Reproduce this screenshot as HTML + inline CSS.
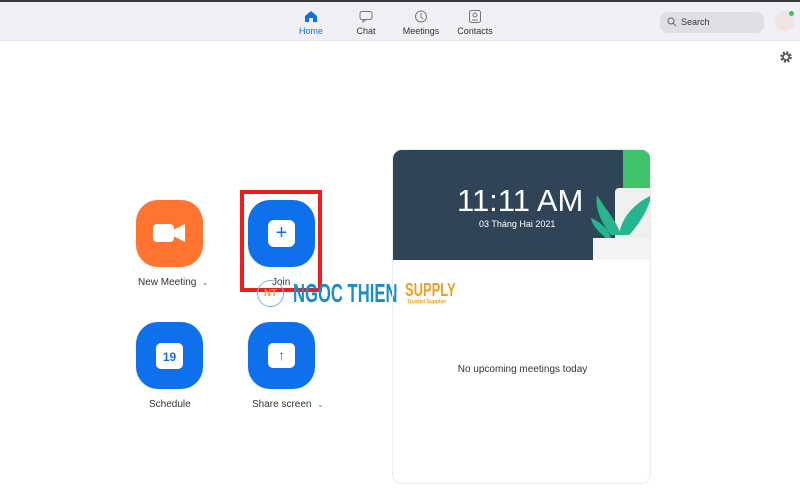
<!DOCTYPE html>
<html><head><meta charset="utf-8"><style>
*{margin:0;padding:0;box-sizing:border-box}
body{width:800px;height:494px;background:#fff;font-family:"Liberation Sans",sans-serif;position:relative;overflow:hidden}
.top{position:absolute;left:0;top:0;width:800px;height:41px;background:#f0f0f4;border-top:2px solid #3a3a3a;border-bottom:1px solid #e6e6ea}
.nav{position:absolute;top:8px;text-align:center;font-size:9px;color:#333;width:60px}
.nav svg{display:block;margin:0 auto 3px}
.search{position:absolute;left:660px;top:10px;width:104px;height:21px;border-radius:8px;background:#dfdfe3;font-size:9px;color:#333;padding:5px 0 0 21px}
.btn{position:absolute;width:67px;height:67px;border-radius:22px;background:#0e71eb}
.lbl{position:absolute;font-size:10px;color:#333;text-align:center}
.card{position:absolute;left:392px;top:149px;width:259px;height:335px;border:1px solid #ececec;border-radius:10px;overflow:hidden}
.hd{height:110px;background:#2f4457;position:relative;color:#fff}
</style></head><body>
<div class="top">
<div class="nav" style="left:281px;color:#0e71eb">
<svg width="14" height="13" viewBox="0 0 14 13"><path d="M1 6 L7 1 L13 6 V12 H9 V8 H5 V12 H1Z" fill="#0e71eb"/></svg>Home</div>
<div class="nav" style="left:336px"><svg width="14" height="13" viewBox="0 0 14 13"><rect x="1" y="1.5" width="12" height="8" rx="2" fill="none" stroke="#777"/><path d="M4 9.5 L4 12 L7 9.5" fill="none" stroke="#777"/></svg>Chat</div>
<div class="nav" style="left:391px"><svg width="14" height="13" viewBox="0 0 14 13"><circle cx="7" cy="6.5" r="5.5" fill="none" stroke="#777"/><path d="M7 3V7L9 9" fill="none" stroke="#777"/></svg>Meetings</div>
<div class="nav" style="left:445px"><svg width="14" height="13" viewBox="0 0 14 13"><rect x="1.5" y="0.5" width="11" height="12" rx="2" fill="none" stroke="#777"/><circle cx="7" cy="5" r="2" fill="none" stroke="#777"/><path d="M4 10h6" stroke="#777"/></svg>Contacts</div>
<div class="search"><svg style="position:absolute;left:7px;top:5px" width="10" height="10" viewBox="0 0 10 10"><circle cx="4" cy="4" r="3" fill="none" stroke="#666"/><path d="M6.3 6.3L9 9" stroke="#666"/></svg>Search</div>
<div style="position:absolute;left:775px;top:9px;width:20px;height:20px;border-radius:50%;background:#f2e3e3"></div>
<div style="position:absolute;left:789px;top:9px;width:5px;height:5px;border-radius:50%;background:#2ecc55"></div>
</div>
<svg style="position:absolute;left:780px;top:51px" width="12" height="12" viewBox="0 0 12 12"><circle cx="6" cy="6" r="4.3" fill="none" stroke="#555" stroke-width="3" stroke-dasharray="2 1.4"/><circle cx="6" cy="6" r="3" fill="none" stroke="#555" stroke-width="1.6"/></svg>

<div class="btn" style="left:136px;top:200px;background:#ff742e"><div style="position:absolute;left:17px;top:24px;width:21px;height:18px;background:#fff;border-radius:4px"></div><svg style="position:absolute;left:37px;top:24px" width="13" height="18"><path d="M0 6 L12 0 V18 L0 12Z" fill="#fff"/></svg></div>
<div class="lbl" style="left:138px;top:277px">New Meeting &nbsp;<span style="font-size:8px;color:#777">⌄</span></div>

<div class="btn" style="left:248px;top:200px"><div style="position:absolute;left:20px;top:20px;width:27px;height:27px;background:#fff;border-radius:6px;color:#0e71eb;font-size:20px;text-align:center;line-height:26px">+</div></div>
<div style="position:absolute;left:240px;top:190px;width:82px;height:102px;border:4px solid #ee1c1c"></div>
<div class="lbl" style="left:272px;top:277px">Join</div>

<div class="btn" style="left:136px;top:322px"><div style="position:absolute;left:20px;top:21px;width:27px;height:26px;background:#fff;border-radius:5px;color:#0e71eb;font-size:12px;font-weight:bold;text-align:center;line-height:29px">19</div></div>
<div class="lbl" style="left:149px;top:399px">Schedule</div>
<div class="btn" style="left:248px;top:322px"><div style="position:absolute;left:20px;top:21px;width:27px;height:25px;background:#fff;border-radius:5px;color:#0e71eb;font-size:14px;font-weight:bold;text-align:center;line-height:25px">↑</div></div>
<div class="lbl" style="left:252px;top:399px">Share screen &nbsp;<span style="font-size:8px;color:#777">⌄</span></div>

<div style="position:absolute;left:257px;top:280px;width:27px;height:27px;border-radius:50%;border:1px solid #7fb0dc;color:#f39a2a;font-size:10px;font-weight:bold;text-align:center;line-height:25px">NT</div>
<div style="position:absolute;left:293px;top:278px;font-size:26px;color:#1d8dc8;font-weight:bold;transform:scaleX(0.64);transform-origin:left;white-space:nowrap">NGOC THIEN</div>
<div style="position:absolute;left:405px;top:280px;font-size:18px;color:#f0a020;font-weight:bold;transform:scaleX(0.72);transform-origin:left">SUPPLY</div>
<div style="position:absolute;left:407px;top:299px;font-size:5px;color:#f0a020;font-weight:bold">Trusted Supplier</div>

<div class="card"><div class="hd">
<div style="position:absolute;left:64px;top:33px;font-size:31px;font-weight:300">11:11 AM</div>
<div style="position:absolute;left:86px;top:69px;font-size:9px">03 Tháng Hai 2021</div>
<div style="position:absolute;left:230px;top:0;width:29px;height:48px;background:#3ec36a"></div>
<div style="position:absolute;left:222px;top:38px;width:37px;height:72px;background:#eef0ee;border-radius:4px 0 0 0"></div>
<svg style="position:absolute;left:198px;top:40px" width="61" height="55"><path d="M20 45 C8 30 4 15 6 5 C15 20 25 30 30 45Z M28 45 C30 30 40 15 61 5 C55 25 45 38 38 45Z M15 48 C5 40 0 32 0 28 C10 32 18 40 20 48Z" fill="#26b58e"/></svg>
<div style="position:absolute;left:200px;top:88px;width:59px;height:22px;background:#f3f3f3"></div>
</div>
<div style="position:absolute;left:0;width:259px;top:214px;text-align:center;font-size:10px;color:#333">No upcoming meetings today</div>
</div>
</body></html>
